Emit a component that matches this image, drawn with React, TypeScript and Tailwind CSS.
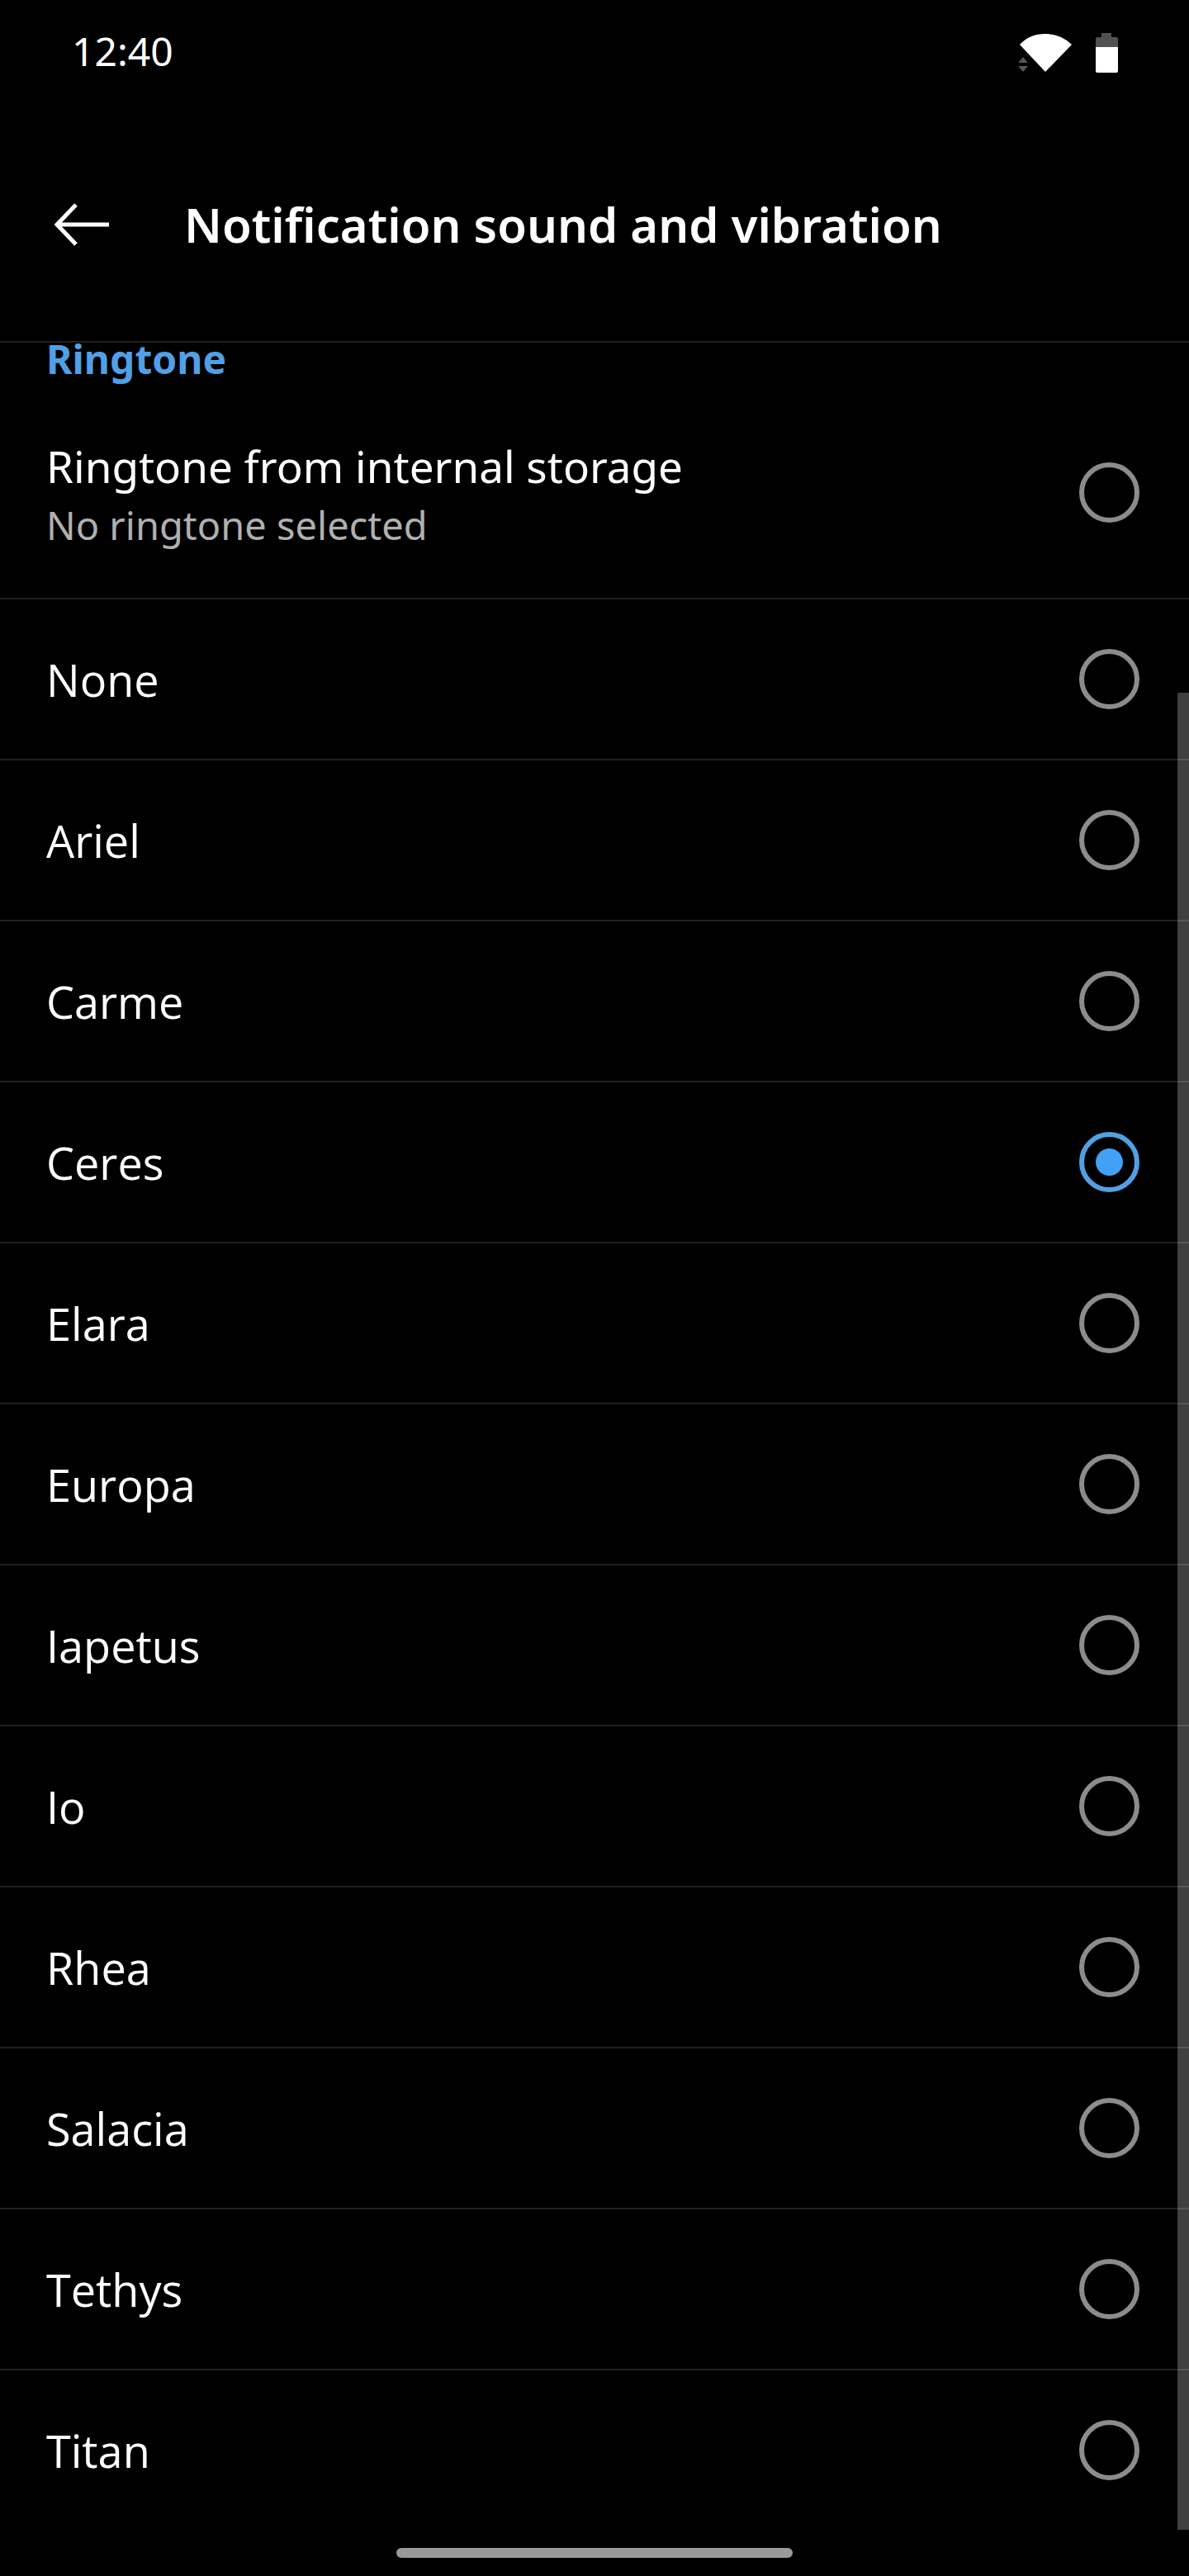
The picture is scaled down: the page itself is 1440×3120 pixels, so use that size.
import { useState } from "react";

const INTERNAL = "internal";
const tones = [
  "None",
  "Ariel",
  "Carme",
  "Ceres",
  "Elara",
  "Europa",
  "Iapetus",
  "Io",
  "Rhea",
  "Salacia",
  "Tethys",
  "Titan",
];

type RadioProps = {
  value: string;
  selected: string;
  onSelect: (value: string) => void;
};

function Radio({ value, selected, onSelect }: RadioProps) {
  return (
    <input
      type="radio"
      name="ringtone"
      value={value}
      checked={selected === value}
      onChange={() => onSelect(value)}
      className="grid size-[73px] shrink-0 appearance-none place-content-center rounded-full border-6 border-[#8c8c8c] before:size-[33px] before:rounded-full before:content-[''] checked:border-[#539fe3] checked:before:bg-[#42a0f5]"
    />
  );
}

function StatusBar() {
  return (
    <div className="flex h-[124px] items-center justify-between pr-[86px] pl-[87px]">
      <time className="text-[48px] leading-none">12:40</time>
      <div className="flex items-center gap-[27px]">
        <svg width="68" height="52" viewBox="0 0 68 52" aria-hidden="true">
          <path d="M3 18Q15 5 34 5T66 18L34 51Z" fill="#fff" />
          <path d="M1 40L7 33L13 40ZM1 44L7 51L13 44Z" fill="#555" />
        </svg>
        <svg width="27" height="52" viewBox="0 0 27 52" aria-hidden="true">
          <path d="M7 4H19V9H25Q27 9 27 11V21H0V11Q0 9 2 9H7Z" fill="#525252" />
          <path d="M0 21H27V50Q27 52 25 52H2Q0 52 0 50Z" fill="#fff" />
        </svg>
      </div>
    </div>
  );
}

export default function App() {
  const [selected, setSelected] = useState("Ceres");

  return (
    <div className="min-h-screen bg-black font-['Noto_Sans',sans-serif] text-white">
      <StatusBar />
      <header className="flex h-[291px] items-center gap-[91px] border-b-2 border-[#202020] pt-[6px] pl-[65px]">
        <button type="button" aria-label="Back">
          <svg width="67" height="52" viewBox="0 0 67 52" fill="none" stroke="#fff" strokeWidth="5" aria-hidden="true">
            <path d="M67 26H5M27 2L4 26L27 50" />
          </svg>
        </button>
        <h1 className="text-[58px] leading-none font-semibold">Notification sound and vibration</h1>
      </header>

      <main className="relative">
        <h2 className="pb-[14px] pl-[56px] text-[48px] leading-[40px] font-bold text-[#519fe6]">Ringtone</h2>
        <label className="flex h-[257px] items-center justify-between border-b-2 border-[#202020] pr-[60px] pl-[56px]">
          <span className="flex flex-col pt-[7px]">
            <span className="text-[53px] leading-[72px]">Ringtone from internal storage</span>
            <span className="text-[47px] leading-[70px] text-[#b0b0b0]">No ringtone selected</span>
          </span>
          <Radio value={INTERNAL} selected={selected} onSelect={setSelected} />
        </label>
        <ul className="divide-y-2 divide-[#202020] font-['Open_Sans',sans-serif]">
          {tones.map((tone) => (
            <li key={tone}>
              <label className="flex h-[193px] items-center justify-between pr-[60px] pl-[56px] text-[54px] leading-[72px]">
                {tone}
                <Radio value={tone} selected={selected} onSelect={setSelected} />
              </label>
            </li>
          ))}
        </ul>
        <div className="absolute top-[424px] right-0 bottom-0 w-[14px] bg-white/25" />
      </main>

      <div className="flex h-[56px] items-center justify-center">
        <div className="h-[12px] w-1/3 rounded-full bg-[#999]" />
      </div>
    </div>
  );
}
